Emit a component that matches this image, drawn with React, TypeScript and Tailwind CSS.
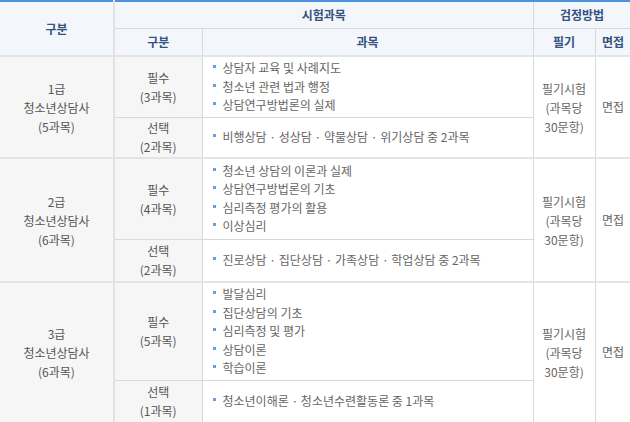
import React from 'react'

type Group = {
  grade: string
  total: string
  required: { count: string; items: string[] }
  elective: { count: string; text: string }
  rowA: string
  rowB: string
}

const groups: Group[] = [
  {
    grade: '1급',
    total: '(5과목)',
    required: {
      count: '(3과목)',
      items: ['상담자 교육 및 사례지도', '청소년 관련 법과 행정', '상담연구방법론의 실제'],
    },
    elective: { count: '(2과목)', text: '비행상담 · 성상담 · 약물상담 · 위기상담 중 2과목' },
    rowA: 'h-[61px]',
    rowB: 'h-[41px]',
  },
  {
    grade: '2급',
    total: '(6과목)',
    required: {
      count: '(4과목)',
      items: ['청소년 상담의 이론과 실제', '상담연구방법론의 기초', '심리측정 평가의 활용', '이상심리'],
    },
    elective: { count: '(2과목)', text: '진로상담 · 집단상담 · 가족상담 · 학업상담 중 2과목' },
    rowA: 'h-[81px]',
    rowB: 'h-[43px]',
  },
  {
    grade: '3급',
    total: '(6과목)',
    required: {
      count: '(5과목)',
      items: ['발달심리', '집단상담의 기초', '심리측정 및 평가', '상담이론', '학습이론'],
    },
    elective: { count: '(1과목)', text: '청소년이해론 · 청소년수련활동론 중 1과목' },
    rowA: 'h-[98px]',
    rowB: 'h-[42px]',
  },
]

function Bullet({ children }: { children: React.ReactNode }) {
  return (
    <li className="flex items-start">
      <span className="mt-[6px] mr-[7px] h-[3px] w-[3px] shrink-0 bg-[#6c9fe0]" />
      <span>{children}</span>
    </li>
  )
}

export default function App() {
  const th = 'border border-[#d9d9d9] bg-[#f3f6fa] text-[#34527e] font-bold text-center'
  const side = 'border border-[#d9d9d9] bg-[#f6f6f6] text-center text-[#555] leading-[19px]'
  const cell = 'border border-[#d9d9d9] bg-white text-[#666]'

  return (
    <div className="w-[630px] h-[422px] overflow-hidden bg-white" style={{ fontFamily: '"Noto Sans CJK KR", "Noto Sans", sans-serif' }}>
      <table className="w-[631px] table-fixed border-collapse border-t-2 border-t-[#4a93dc] text-[12px]">
        <colgroup>
          <col className="w-[114px]" />
          <col className="w-[88px]" />
          <col className="w-[331px]" />
          <col className="w-[62px]" />
          <col className="w-[36px]" />
        </colgroup>
        <thead>
          <tr className="h-[27px]">
            <th rowSpan={2} className={`${th} border-l-0 border-r-2 border-r-[#e2e2e2]`}>구분</th>
            <th colSpan={2} className={th}>시험과목</th>
            <th colSpan={2} className={th}>검정방법</th>
          </tr>
          <tr className="h-[28px]">
            <th className={th}>구분</th>
            <th className={th}>과목</th>
            <th className={th}>필기</th>
            <th className={th}>면접</th>
          </tr>
        </thead>
        <tbody>
          {groups.map((g) => (
            <React.Fragment key={g.grade}>
              <tr className={`${g.rowA} border-t-2 border-t-[#e4e4e4]`}>
                <td rowSpan={2} className={`${side} border-l-0 border-r-2 border-r-[#e2e2e2]`}>
                  <div>{g.grade}</div>
                  <div>청소년상담사</div>
                  <div>{g.total}</div>
                </td>
                <td className={side}>
                  <div>필수</div>
                  <div>{g.required.count}</div>
                </td>
                <td className={`${cell} px-[10px] py-0 leading-[18.5px]`}>
                  <ul>
                    {g.required.items.map((it) => (
                      <Bullet key={it}>{it}</Bullet>
                    ))}
                  </ul>
                </td>
                <td rowSpan={2} className={`${cell} text-center leading-[19px]`}>
                  <div>필기시험</div>
                  <div>(과목당</div>
                  <div>30문항)</div>
                </td>
                <td rowSpan={2} className={`${cell} text-center`}>면접</td>
              </tr>
              <tr className={g.rowB}>
                <td className={`${side} py-0`}>
                  <div>선택</div>
                  <div>{g.elective.count}</div>
                </td>
                <td className={`${cell} px-[10px] leading-[18px]`}>
                  <ul>
                    <Bullet>{g.elective.text}</Bullet>
                  </ul>
                </td>
              </tr>
            </React.Fragment>
          ))}
        </tbody>
      </table>
    </div>
  )
}
